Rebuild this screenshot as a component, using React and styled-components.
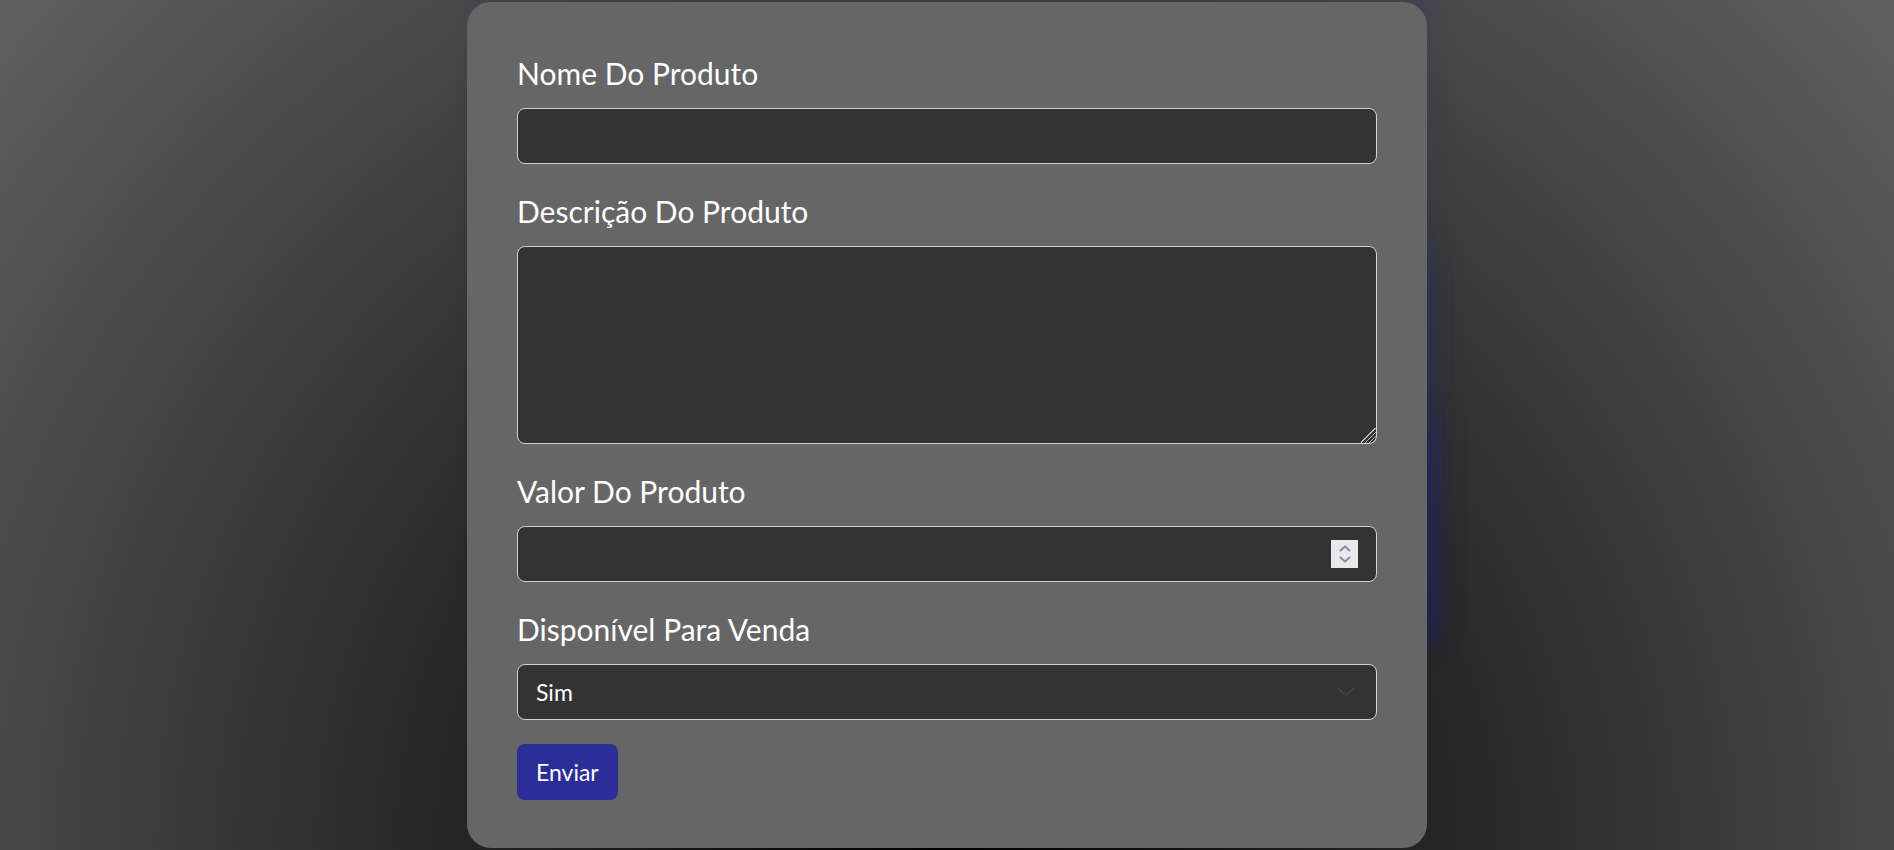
import React from "react";
import styled, { createGlobalStyle } from "styled-components";

const GlobalStyle = createGlobalStyle`
  html, body {
    margin: 0;
    padding: 0;
  }
  body {
    font-family: Lato, "Open Sans", sans-serif;
  }
  * { box-sizing: border-box; }
`;

const Page = styled.div`
  min-height: 100vh;
  display: flex;
  justify-content: center;
  align-items: center;
  background: radial-gradient(circle at 50% 100%, #000000 0%, #606060 100%);
`;

const Card = styled.form`
  width: 960px;
  padding: 53px 50px 48px;
  background: #666666;
  border-radius: 24px;
  display: flex;
  flex-direction: column;
  box-shadow:
    7.5px -204.5px 24px -2.5px rgba(28, 30, 130, 0.16),
    232.5px 20.5px 30px -227.5px rgba(28, 30, 140, 0.22),
    317.5px 105.5px 30px -312.5px rgba(28, 30, 150, 0.34);
`;

const Field = styled.div`
  display: flex;
  flex-direction: column;
  margin-bottom: ${(p) => p.$after}px;
`;

const Label = styled.label`
  font-family: Lato, "Open Sans", sans-serif;
  font-size: 30px;
  line-height: 36px;
  color: #ffffff;
  margin-bottom: 17px;
`;

const controlBase = `
  width: 100%;
  border: 1px solid #d2d2d2;
  border-radius: 8px;
  background: #333333;
  color: #ffffff;
  font-family: Lato, "Open Sans", sans-serif;
  font-size: 23px;
  padding: 0 18px;
  outline: none;
`;

const TextInput = styled.input`
  ${controlBase}
  height: 56px;
`;

const NumberWrap = styled.div`
  position: relative;
`;

const NumberInput = styled.input`
  ${controlBase}
  height: 56px;
  padding-right: 56px;
  -moz-appearance: textfield;
  &::-webkit-inner-spin-button,
  &::-webkit-outer-spin-button {
    -webkit-appearance: none;
    margin: 0;
  }
`;

const Spinner = styled.div`
  position: absolute;
  right: 19px;
  top: 14px;
  width: 27px;
  height: 28px;
  background: #e9e8ee;
  display: flex;
  flex-direction: column;
  align-items: center;
  justify-content: center;
  gap: 4px;
  pointer-events: none;
`;

const TextArea = styled.textarea`
  ${controlBase}
  height: 198px;
  padding: 12px 18px;
  display: block;
  resize: vertical;
  &::-webkit-scrollbar {
    width: 22px;
    height: 22px;
    background: transparent;
  }
  &::-webkit-resizer {
    background: linear-gradient(
      135deg,
      transparent 0 46%,
      #b8b8b8 46% 51%,
      transparent 51% 60%,
      #b8b8b8 60% 65%,
      transparent 65% 74%,
      #b8b8b8 74% 79%,
      transparent 79% 88%,
      #b8b8b8 88% 93%,
      transparent 93%
    );
  }
`;

const SelectWrap = styled.div`
  position: relative;
`;

const Select = styled.select`
  ${controlBase}
  height: 56px;
  appearance: none;
  -webkit-appearance: none;
`;

const Chevron = styled.svg`
  position: absolute;
  right: 22px;
  top: 23px;
  pointer-events: none;
`;

const SubmitButton = styled.button`
  align-self: flex-start;
  height: 56px;
  padding: 0 19px;
  border: none;
  border-radius: 8px;
  background: #2b2e97;
  color: #ffffff;
  font-family: Lato, "Open Sans", sans-serif;
  font-size: 23px;
  cursor: pointer;
`;

export default function App() {
  return (
    <>
      <GlobalStyle />
      <Page>
        <Card onSubmit={(e) => e.preventDefault()}>
          <Field $after={29}>
            <Label htmlFor="nome">Nome Do Produto</Label>
            <TextInput id="nome" type="text" />
          </Field>
          <Field $after={29}>
            <Label htmlFor="descricao">Descrição Do Produto</Label>
            <TextArea id="descricao" />
          </Field>
          <Field $after={29}>
            <Label htmlFor="valor">Valor Do Produto</Label>
            <NumberWrap>
              <NumberInput id="valor" type="number" />
              <Spinner>
                <svg width="12" height="7" viewBox="0 0 12 7">
                  <polyline
                    points="1.5,5.5 6,1.5 10.5,5.5"
                    fill="none"
                    stroke="#8d8a9b"
                    strokeWidth="2"
                    strokeLinecap="round"
                    strokeLinejoin="round"
                  />
                </svg>
                <svg width="12" height="7" viewBox="0 0 12 7">
                  <polyline
                    points="1.5,1.5 6,5.5 10.5,1.5"
                    fill="none"
                    stroke="#8d8a9b"
                    strokeWidth="2"
                    strokeLinecap="round"
                    strokeLinejoin="round"
                  />
                </svg>
              </Spinner>
            </NumberWrap>
          </Field>
          <Field $after={24}>
            <Label htmlFor="disponivel">Disponível Para Venda</Label>
            <SelectWrap>
              <Select id="disponivel" defaultValue="sim">
                <option value="sim">Sim</option>
                <option value="nao">Não</option>
              </Select>
              <Chevron width="18" height="10" viewBox="0 0 18 10">
                <polyline
                  points="1.5,1.5 9,8.5 16.5,1.5"
                  fill="none"
                  stroke="#3a414b"
                  strokeWidth="2"
                  strokeLinecap="round"
                  strokeLinejoin="round"
                />
              </Chevron>
            </SelectWrap>
          </Field>
          <SubmitButton type="submit">Enviar</SubmitButton>
        </Card>
      </Page>
    </>
  );
}
